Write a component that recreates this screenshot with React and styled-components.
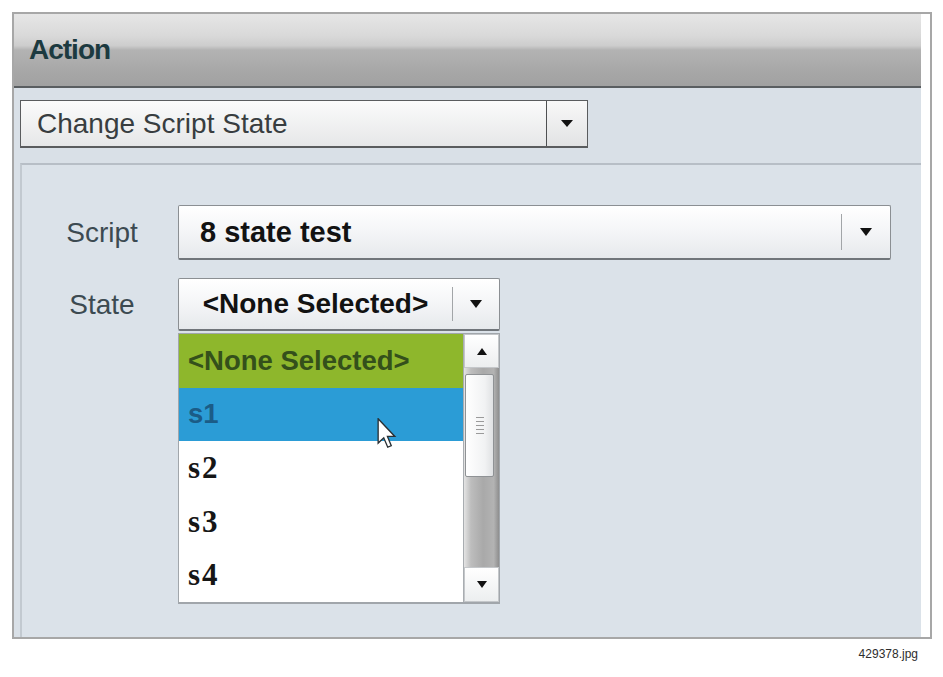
import React from "react";
import styled, { createGlobalStyle } from "styled-components";

const GlobalStyle = createGlobalStyle`
  html, body { margin: 0; padding: 0; background: #ffffff; }
  body { font-family: "Liberation Sans", Arial, sans-serif; }
  * { box-sizing: border-box; }
`;

const Page = styled.div`
  width: 943px;
  height: 677px;
  padding: 12px 0 0 12px;
`;

const Frame = styled.div`
  width: 920px;
  height: 627px;
  border: 2px solid #a7a7a7;
  background: #ffffff;
  padding-right: 9px;
  display: flex;
`;

const Content = styled.div`
  flex: 1;
  display: flex;
  flex-direction: column;
  background: #d9e0e7;
`;

const Header = styled.div`
  height: 74px;
  flex: none;
  display: flex;
  align-items: center;
  padding: 0 0 0 15px;
  border-bottom: 2px solid #5a5e61;
  background: linear-gradient(
    to bottom,
    #e6e6e6 0%,
    #d9d9d9 30%,
    #cdcdcd 44%,
    #b3b3b3 50%,
    #a7a7a7 80%,
    #a1a1a1 100%
  );
  font-weight: bold;
  font-size: 28px;
  letter-spacing: -1px;
  color: #1c3a40;
`;

const TopBar = styled.div`
  padding: 12px 0 15px 6px;
  flex: none;
`;

const TopSelect = styled.div`
  width: 568px;
  height: 48px;
  display: flex;
  border: 1px solid #5a5c5e;
  border-bottom-width: 2px;
  background: linear-gradient(to bottom, #fbfbfb, #e6e7e8);
`;

const TopText = styled.div`
  flex: 1;
  display: flex;
  align-items: center;
  padding-left: 16px;
  font-size: 28px;
  color: #383d40;
`;

const TopButton = styled.div`
  width: 41px;
  border-left: 1px solid #4e5052;
  display: flex;
  align-items: center;
  justify-content: center;
  background: linear-gradient(to bottom, #f8f8f8, #e2e3e4);
`;

const Triangle = styled.span`
  width: 0;
  height: 0;
  border-left: ${(p) => p.$w / 2}px solid transparent;
  border-right: ${(p) => p.$w / 2}px solid transparent;
  ${(p) => (p.$up ? "border-bottom" : "border-top")}: ${(p) => p.$h}px solid #111;
`;

const Panel = styled.div`
  flex: 1;
  margin-left: 6px;
  border-top: 2px solid #b7bec6;
  border-left: 2px solid #c2c9d0;
  background: #dbe2e9;
  padding: 40px 30px 0 0;
  display: flex;
  flex-direction: column;
`;

const Row = styled.div`
  display: grid;
  grid-template-columns: 156px 1fr;
  align-items: start;
  margin-top: ${(p) => p.$gap || 0}px;
`;

const Label = styled.div`
  height: ${(p) => p.$h}px;
  display: flex;
  align-items: center;
  justify-content: center;
  padding-left: 4px;
  font-size: 28px;
  color: #3c4a51;
`;

const Select = styled.div`
  width: ${(p) => (p.$w ? `${p.$w}px` : "100%")};
  height: ${(p) => p.$h}px;
  display: flex;
  border: 1px solid #8b8f93;
  border-bottom: 2px solid #70757a;
  border-radius: 2px;
  background: linear-gradient(to bottom, #ffffff 0%, #f4f5f7 50%, #e6e9ec 100%);
`;

const SelectText = styled.div`
  flex: 1;
  display: flex;
  align-items: center;
  justify-content: ${(p) => (p.$center ? "center" : "flex-start")};
  padding-left: ${(p) => (p.$center ? 0 : 21)}px;
  font-size: ${(p) => p.$size}px;
  font-weight: bold;
  color: #121212;
`;

const Divider = styled.div`
  width: 1px;
  margin: 8px 0;
  background: #a2a5a8;
`;

const ArrowBox = styled.div`
  width: ${(p) => p.$w}px;
  display: flex;
  align-items: center;
  justify-content: center;
`;

const Column = styled.div`
  display: flex;
  flex-direction: column;
`;

const List = styled.div`
  position: relative;
  margin-top: 2px;
  width: 322px;
  display: flex;
  border: 1px solid #a1a6ab;
  border-bottom-width: 2px;
  background: #ffffff;
`;

const Items = styled.div`
  flex: 1;
  display: flex;
  flex-direction: column;
`;

const Item = styled.div`
  height: 53.6px;
  display: flex;
  align-items: center;
  padding-left: 9px;
  background: ${(p) => p.$bg || "#ffffff"};
  color: ${(p) => p.$color || "#161616"};
  font-family: ${(p) =>
    p.$serif ? '"Liberation Serif", "Times New Roman", serif' : '"Liberation Sans", Arial, sans-serif'};
  font-weight: bold;
  font-size: ${(p) => (p.$serif ? 31 : 27.5)}px;
  letter-spacing: ${(p) => (p.$serif ? 2 : 0)}px;
`;

const Scrollbar = styled.div`
  width: 36px;
  display: flex;
  flex-direction: column;
  border-left: 1px solid #a9adb1;
  background: #e9eaeb;
`;

const ScrollButton = styled.div`
  height: ${(p) => p.$h}px;
  display: flex;
  align-items: center;
  justify-content: center;
  background: linear-gradient(to bottom, #ffffff, #eceeef);
  border: 1px solid #c4c7ca;
`;

const Track = styled.div`
  flex: 1;
  padding: 6px 5px 0 1px;
  background: linear-gradient(
    to right,
    #e4e4e4 0%,
    #bdbdbd 20%,
    #a9a9a9 55%,
    #b3b3b3 85%,
    #8e8e8e 100%
  );
`;

const Thumb = styled.div`
  height: 103px;
  border: 1px solid #8f9295;
  border-radius: 2px;
  background: linear-gradient(to right, #ffffff, #f1f2f3 70%, #dfe1e3);
  display: flex;
  flex-direction: column;
  align-items: center;
  justify-content: center;
  gap: 3px;
`;

const Grip = styled.span`
  width: 8px;
  height: 1px;
  background: #9a9a9a;
`;

const Cursor = styled.svg`
  position: absolute;
  left: 198px;
  top: 84px;
`;

const Footer = styled.div`
  width: 920px;
  margin-top: 8px;
  padding-right: 14px;
  text-align: right;
  font-size: 12px;
  line-height: 14px;
  color: #2d2d2d;
`;

export default function App() {
  return (
    <Page>
      <GlobalStyle />
      <Frame>
        <Content>
          <Header>Action</Header>
          <TopBar>
            <TopSelect>
              <TopText>Change Script State</TopText>
              <TopButton>
                <Triangle $w={13} $h={7} />
              </TopButton>
            </TopSelect>
          </TopBar>
          <Panel>
            <Row>
              <Label $h={55}>Script</Label>
              <Select $h={55}>
                <SelectText $size={29}>8 state test</SelectText>
                <Divider />
                <ArrowBox $w={48}>
                  <Triangle $w={13} $h={8} />
                </ArrowBox>
              </Select>
            </Row>
            <Row $gap={18}>
              <Label $h={53}>State</Label>
              <Column>
                <Select $w={322} $h={53}>
                  <SelectText $center $size={28}>&lt;None Selected&gt;</SelectText>
                  <Divider />
                  <ArrowBox $w={46}>
                    <Triangle $w={13} $h={8} />
                  </ArrowBox>
                </Select>
                <List>
                  <Items>
                    <Item $bg="#8eb72c" $color="#34501b">&lt;None Selected&gt;</Item>
                    <Item $bg="#2b9cd6" $color="#1b5c87">s1</Item>
                    <Item $serif>s2</Item>
                    <Item $serif>s3</Item>
                    <Item $serif>s4</Item>
                  </Items>
                  <Scrollbar>
                    <ScrollButton $h={34}>
                      <Triangle $up $w={11} $h={7} />
                    </ScrollButton>
                    <Track>
                      <Thumb>
                        <Grip />
                        <Grip />
                        <Grip />
                        <Grip />
                        <Grip />
                      </Thumb>
                    </Track>
                    <ScrollButton $h={35}>
                      <Triangle $w={11} $h={7} />
                    </ScrollButton>
                  </Scrollbar>
                  <Cursor width="20" height="31" viewBox="0 0 13 21">
                    <path
                      d="M0.5 0.5 L0.5 17 L4.3 13.4 L7 19.8 L9.4 18.8 L6.8 12.5 L11.8 12.5 Z"
                      fill="#ffffff"
                      stroke="#2a2f33"
                      strokeWidth="0.9"
                      strokeLinejoin="miter"
                    />
                  </Cursor>
                </List>
              </Column>
            </Row>
          </Panel>
        </Content>
      </Frame>
      <Footer>429378.jpg</Footer>
    </Page>
  );
}
